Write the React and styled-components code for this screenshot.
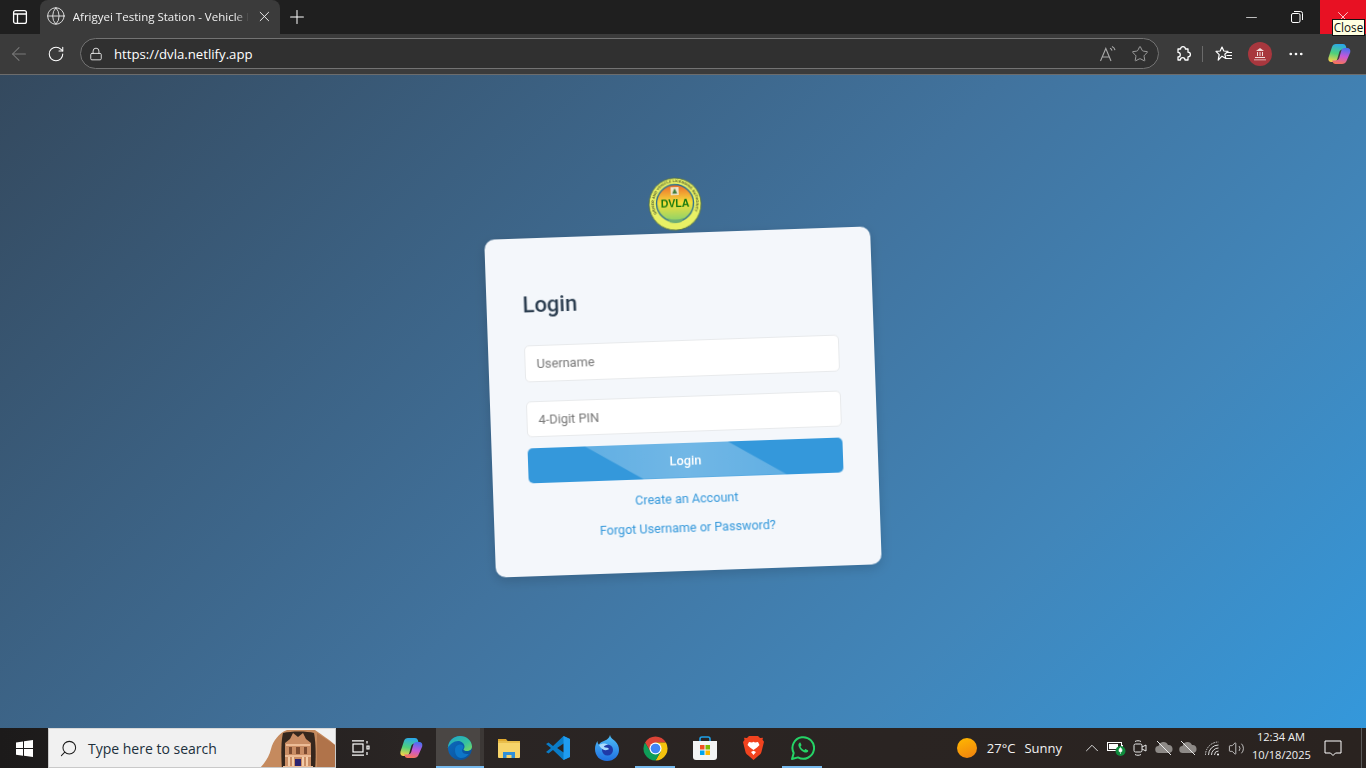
import React from 'react';
import styled, { createGlobalStyle } from 'styled-components';
import {
  ArrowLeft,
  ChevronUp,
  Ellipsis,
  Globe,
  Lock,
  Minus,
  Plus,
  RotateCw,
  Search,
  Star,
  Volume2,
  X,
} from 'lucide-react';

const GlobalStyle = createGlobalStyle`
  html, body {
    margin: 0;
    height: 100%;
    overflow: hidden;
  }
  * {
    box-sizing: border-box;
  }
`;

const Screen = styled.div`
  width: 1366px;
  height: 768px;
  display: flex;
  flex-direction: column;
  font-family: 'Open Sans', 'Noto Sans', sans-serif;
  overflow: hidden;
`;

/* browser chrome */
const TitleBar = styled.div`
  height: 34px;
  background: #1f1f1f;
  display: flex;
  align-items: stretch;
  color: #fff;
  position: relative;
`;

const SideButton = styled.div`
  width: 40px;
  display: flex;
  align-items: center;
  justify-content: center;
`;

const Tab = styled.div`
  width: 240px;
  background: #3b3b3b;
  border-radius: 8px 8px 0 0;
  display: flex;
  align-items: center;
  padding: 0 7px 2px 6px;
  gap: 7px;
`;

const TabTitle = styled.span`
  flex: 1;
  font-size: 11.5px;
  white-space: nowrap;
  color: #f2f2f2;
  -webkit-mask-image: linear-gradient(90deg, #000 92%, transparent 100%);
  mask-image: linear-gradient(90deg, #000 92%, transparent 100%);
`;

const NewTab = styled.div`
  width: 34px;
  display: flex;
  align-items: center;
  justify-content: center;
`;

const Spacer = styled.div`
  flex: 1;
`;

const WinButton = styled.div`
  width: 46px;
  display: flex;
  align-items: center;
  justify-content: center;
  background: ${({ $close }) => ($close ? '#e81123' : 'transparent')};
`;

const Tooltip = styled.div`
  position: absolute;
  top: 19px;
  right: 1px;
  width: 33px;
  height: 17px;
  background: #ffffe1;
  border: 1px solid #111;
  color: #111;
  font-size: 11.7px;
  line-height: 15px;
  text-align: center;
  z-index: 2;
`;

const ToolBar = styled.div`
  height: 41px;
  background: #3b3b3b;
  border-bottom: 1px solid #6c6c6c;
  display: flex;
  align-items: center;
  color: #fff;
  padding-bottom: 1px;
`;

const NavButton = styled.div`
  width: ${({ $w }) => $w || 36}px;
  display: flex;
  align-items: center;
  justify-content: center;
`;

const AddressBar = styled.div`
  width: 1079px;
  height: 31px;
  margin: 0 6px 0 6px;
  border: 1px solid #737373;
  border-radius: 16px;
  background: #303030;
  display: flex;
  align-items: center;
  padding: 0 2px 0 8px;
`;

const Url = styled.span`
  flex: 1;
  margin-left: 11px;
  font-size: 13.2px;
  color: #fff;
`;

const AddressAction = styled.div`
  width: 32px;
  display: flex;
  justify-content: center;
  color: #a8a8a8;
`;

const Divider = styled.div`
  width: 1px;
  height: 16px;
  background: #6a6a6a;
  margin: 0 3px 0 1px;
`;

const Avatar = styled.div`
  width: 24px;
  height: 24px;
  border-radius: 50%;
  background: #a8373e;
  display: flex;
  align-items: center;
  justify-content: center;
`;

/* page */
const Page = styled.main`
  flex: 1;
  background: linear-gradient(135deg, #34495e 0%, #41739e 50%, #4186ba 75%, #3498db 100%);
  display: flex;
  align-items: center;
  justify-content: center;
  font-family: Roboto, 'Liberation Sans', sans-serif;
`;

const Card = styled.section`
  width: 386px;
  height: 338px;
  padding: 53px 35px 0 36px;
  background: #f4f7fb;
  border-radius: 10px;
  box-shadow: 0 4px 12px rgba(0, 0, 0, 0.15);
  transform: rotate(-2deg);
  will-change: transform;
  position: relative;
`;

const Logo = styled.svg`
  position: absolute;
  top: -56px;
  left: 165px;
  width: 54px;
  height: 54px;
`;

const Heading = styled.h2`
  margin: 0 0 26px;
  font-size: 22px;
  line-height: 28px;
  font-weight: 500;
  color: #2c3e50;
`;

const Input = styled.input`
  display: block;
  width: 100%;
  height: 36.5px;
  padding: 0 11px;
  margin-bottom: ${({ $last }) => ($last ? 10.5 : 19.25)}px;
  border: 1px solid #e8eaec;
  border-radius: 5px;
  background: #fff;
  font-family: inherit;
  font-size: 12.8px;
  outline: none;

  &::placeholder {
    color: #777;
  }
`;

const LoginButton = styled.button`
  display: block;
  width: 100%;
  height: 35px;
  border: none;
  border-radius: 5px;
  background: #3498db;
  color: #fff;
  font-family: inherit;
  font-size: 12.8px;
  font-weight: 500;
  position: relative;
  overflow: hidden;

  &::before {
    content: '';
    position: absolute;
    inset: 0;
    background: linear-gradient(90deg, rgba(255, 255, 255, 0.18), rgba(255, 255, 255, 0.3), rgba(255, 255, 255, 0.18));
    clip-path: polygon(57px 0, 200px 0, 258px 100%, 115px 100%);
  }

  span {
    position: relative;
  }
`;

const LinkRow = styled.div`
  display: flex;
  flex-direction: column;
  align-items: center;
  gap: 12px;
  margin-top: 12px;
`;

const TextLink = styled.a`
  font-size: 12.6px;
  line-height: 17px;
  color: #3498db;
`;

/* windows taskbar */
const TaskBar = styled.footer`
  height: 40px;
  background: linear-gradient(90deg, #1c1a1a, #2a2524 30%, #2a2320);
  display: flex;
  align-items: stretch;
  color: #fff;
`;

const StartButton = styled.div`
  width: 48px;
  display: flex;
  align-items: center;
  justify-content: center;
`;

const SearchBox = styled.div`
  width: 288px;
  background: #f1f1f1;
  border: 1px solid #c9c9c9;
  border-top-color: #d8d8d8;
  display: flex;
  align-items: center;
  padding-left: 10px;
  color: #1c1c1c;
  position: relative;
  overflow: hidden;
`;

const SearchIcon = styled(Search)`
  transform: scaleX(-1);
`;

const SearchText = styled.span`
  margin-left: 10px;
  font-size: 14px;
  color: #20303c;
`;

const Petra = styled.svg`
  position: absolute;
  right: 0;
  top: 0;
  width: 76px;
  height: 40px;
`;

const TaskItem = styled.div`
  width: ${({ $w }) => $w || 49}px;
  display: flex;
  align-items: center;
  justify-content: center;
  position: relative;
  background: ${({ $active }) => ($active ? '#4a4644' : 'transparent')};
  box-shadow: ${({ $active }) => ($active ? 'inset -4px 0 0 #3c3836' : 'none')};

  &::after {
    content: '';
    display: ${({ $open }) => ($open ? 'block' : 'none')};
    position: absolute;
    left: ${({ $active }) => ($active ? 0 : '4px')};
    right: ${({ $active }) => ($active ? 0 : '5px')};
    bottom: 0;
    height: 2px;
    background: #76b9ed;
  }
`;

const Weather = styled.div`
  display: flex;
  align-items: center;
  margin-left: auto;
  font-size: 13px;
  color: #f1f1f1;
`;

const Sun = styled.div`
  width: 20px;
  height: 20px;
  border-radius: 50%;
  background: linear-gradient(160deg, #ffb900, #f0800f);
  margin-right: 10px;
`;

const WeatherLabel = styled.span`
  margin-left: 9px;
`;

const Tray = styled.div`
  display: flex;
  align-items: center;
  margin-left: 18px;
`;

const TrayIcon = styled.div`
  width: 24px;
  display: flex;
  align-items: center;
  justify-content: center;
  color: #e8e8e8;
`;

const Clock = styled.div`
  width: 58px;
  margin-left: 4px;
  white-space: nowrap;
  text-align: center;
  font-size: 11.1px;
  line-height: 18px;
  color: #f1f1f1;
`;

const Notify = styled.div`
  width: 46px;
  display: flex;
  align-items: center;
  justify-content: center;
`;

const ShowDesktop = styled.div`
  width: 5px;
  margin-left: 5px;
  border-left: 1px solid #5a5a5a;
`;

const SidebarIcon = () => (
  <svg width="16" height="16" viewBox="0 0 16 16" fill="none" stroke="#fff" strokeWidth="1.3">
    <rect x="1.6" y="1.6" width="12.8" height="12.8" rx="2" />
    <path d="M2 5h12M5.5 5v9" />
  </svg>
);

const RestoreIcon = () => (
  <svg width="12" height="12" viewBox="0 0 12 12" fill="none" stroke="#fff" strokeWidth="1">
    <rect x="0.5" y="2.5" width="8.5" height="9" rx="1.5" />
    <path d="M3 0.5h6.5a2 2 0 0 1 2 2V9" />
  </svg>
);

const ReadAloudIcon = () => (
  <svg width="18" height="18" viewBox="0 0 18 18" fill="none" stroke="currentColor" strokeWidth="1.1">
    <path d="M1.5 16 6.8 3.5 12 16M3.4 12h7" />
    <path d="M11 3.2c1.2.5 1.8 1.3 2 2.4M13 1.4c1.800.8 2.700 2 3 3.800" />
  </svg>
);

const ExtensionIcon = () => (
  <svg width="18" height="18" viewBox="0 0 18 18" fill="none" stroke="#fff" strokeWidth="1.3" strokeLinejoin="round">
    <path d="M4 4h2.600a2.400 2.400 0 1 1 4.800 0H14v3.200a2.400 2.400 0 1 1 0 4.800V15h-3a2.300 2.300 0 0 0-4.600 0H4v-3a2.300 2.300 0 0 0 0-4.600z" />
  </svg>
);

const FavoritesIcon = () => (
  <svg width="18" height="18" viewBox="0 0 18 18" fill="none" stroke="#fff" strokeWidth="1.2">
    <path d="M7 2 8.800 6l4.200.4-3.200 2.800 1 4.200L7 11.200 3.200 15l1-5.300L1 6.400 5.200 6z" strokeLinejoin="round" />
    <path d="M12 7.500h5M11.500 10.500h5.500M11 13.500h6" />
  </svg>
);

const CopilotIcon = ({ size = 24, id = 'cp' }) => (
  <svg width={size} height={size} viewBox="0 0 24 24">
    <defs>
      <linearGradient id={`${id}a`} x1="0.6" y1="0" x2="0.4" y2="1">
        <stop offset="0" stopColor="#2aa7ea" />
        <stop offset="0.55" stopColor="#4fd07a" />
        <stop offset="1" stopColor="#f4d24b" />
      </linearGradient>
      <linearGradient id={`${id}b`} x1="0.6" y1="0" x2="0.4" y2="1">
        <stop offset="0" stopColor="#4a6ff0" />
        <stop offset="0.5" stopColor="#c558d8" />
        <stop offset="1" stopColor="#f7735a" />
      </linearGradient>
    </defs>
    <path d="M9 2h7c1.500 0 2.300.8 2.800 2l1 3.500h-4c-2 0-3 1-3.500 2.500l-2 7c-.5 1.800-1.500 3-3.500 3H4.500C2 20 .8 18 1.500 15.500L5 5c.6-2 2-3 4-3z" fill={`url(#${id}a)`} />
    <path d="M15 22H8.500c-1.500 0-2.300-.8-2.800-2l-.5-1.500h3.500c2 0 3-1 3.500-2.500l2-7c.5-1.800 1.500-3 3.500-3h2.500c2.500 0 3.700 2 3 4.500L19.500 19c-.7 2-2.500 3-4.500 3z" fill={`url(#${id}b)`} />
  </svg>
);

const WindowsIcon = () => (
  <svg width="17" height="17" viewBox="0 0 17 17" fill="#fff">
    <path d="M0 2.400 7 1.400v6.700H0zM8 1.200 17 0v8.100H8zM0 9h7v6.700l-7-1zM8 9h9v8l-9-1.200z" />
  </svg>
);

const TaskViewIcon = () => (
  <svg width="18" height="16" viewBox="0 0 18 16" fill="none" stroke="#fff" strokeWidth="1.2">
    <path d="M0 .8h12M0 15.200h12" />
    <rect x="1" y="4" width="10" height="8" />
    <path d="M15 1v2.500M15 6h2v3h-2zM15 12v3" />
  </svg>
);

const EdgeIcon = () => (
  <svg width="26" height="26" viewBox="0 0 26 26">
    <defs>
      <linearGradient id="edgeTop" x1="0" y1="0" x2="1" y2="1">
        <stop offset="0" stopColor="#1fa4c9" />
        <stop offset="0.6" stopColor="#35c1a0" />
        <stop offset="1" stopColor="#7ddb5c" />
      </linearGradient>
      <linearGradient id="edgeLow" x1="0" y1="0" x2="1" y2="1">
        <stop offset="0" stopColor="#0c6cc0" />
        <stop offset="1" stopColor="#0b4f96" />
      </linearGradient>
    </defs>
    <circle cx="13" cy="13" r="12" fill="url(#edgeLow)" />
    <path d="M1 13C1 6 6.500 1 13 1c6.800 0 12 5 12 10.500 0 3-2.500 4.500-5 4.500-2 0-3.500-.6-3.500-1.500 0-.7 1-1 1-3 0-3-3-5.500-6.500-5.500-4.500 0-7.500 3-10.500 7z" fill="url(#edgeTop)" />
    <path d="M8 15c0-4 3-5.500 5.500-5.500 1.500 0 3 .9 3 2.500 0 1.800-1.500 2-1.500 3.500 0 3 4 4.300 7 3.200-2 2.800-5 4.300-8 4.300-4 0-6-4-6-8z" fill="#0d76c8" />
  </svg>
);

const FolderIcon = () => (
  <svg width="24" height="20" viewBox="0 0 24 20">
    <path d="M1 1h8l2 2.500H1z" fill="#e0a92e" />
    <rect x="1" y="3" width="22" height="17" rx="1" fill="#f7d46a" />
    <rect x="1" y="3" width="22" height="2" fill="#e9be4c" />
    <path d="M6 20v-6h12v6h-3.500v-3h-5v3z" fill="#2f8fd8" />
  </svg>
);

const VSCodeIcon = () => (
  <svg width="24" height="24" viewBox="0 0 24 24">
    <path d="M17.500 0 24 3v18l-6.500 3L7 14l-4.500 3.500L0 16l5-4-5-4 2.500-1.500L7 10z" fill="#0a7cc7" />
    <path d="M17.500 0 24 3v18l-6.500 3V16.500L11 12l6.500-4.500z" fill="#1f9cf0" />
    <path d="M17.500 7.500 11 12l6.500 4.500z" fill="#2a2320" />
  </svg>
);

const FirefoxIcon = () => (
  <svg width="24" height="26" viewBox="0 0 24 26">
    <defs>
      <linearGradient id="ffx" x1="0.5" y1="0" x2="0.5" y2="1">
        <stop offset="0" stopColor="#4fc0f8" />
        <stop offset="1" stopColor="#1f6fe0" />
      </linearGradient>
    </defs>
    <path d="M15 0c.5 3 3 4 5 6 3 3 4 6 4 9 0 6-5 11-12 11S0 21 0 14c0-3 1-6 2.500-8C2.500 8 3 9 4 9.500 5 7 8 6.500 10 5.500 12 4.500 14.500 3 15 0z" fill="url(#ffx)" />
    <circle cx="12.500" cy="15" r="5.500" fill="#1f3aa8" />
    <path d="M4 10c3-2 7-2 9 0-2 0-4 .5-4 2 2 1 4 0 5 2-2 2-7 2-10-4z" fill="#a8dafc" />
  </svg>
);

const ChromeIcon = () => (
  <svg width="29" height="29" viewBox="0 0 48 48">
    <path d="M41.320 14A20 20 0 0 0 6.680 14L15.340 29 24 14z" fill="#db4437" />
    <path d="M41.320 14A20 20 0 0 1 24 44L32.660 29 24 14z" fill="#f4c20d" />
    <path d="M24 44A20 20 0 0 1 6.680 14L15.340 29H32.660z" fill="#0f9d58" />
    <circle cx="24" cy="24" r="10" fill="#fff" />
    <circle cx="24" cy="24" r="8" fill="#4285f4" />
  </svg>
);

const StoreIcon = () => (
  <svg width="24" height="24" viewBox="0 0 24 24">
    <path d="M7 6V3a2 2 0 0 1 2-2h6a2 2 0 0 1 2 2v3" fill="none" stroke="#1fa0e8" strokeWidth="1.600" />
    <path d="M0 5h24v16a3 3 0 0 1-3 3H3a3 3 0 0 1-3-3z" fill="#f4f4f4" />
    <rect x="7" y="9" width="4.500" height="4.500" fill="#f25022" />
    <rect x="12.500" y="9" width="4.500" height="4.500" fill="#7fba00" />
    <rect x="7" y="14.500" width="4.500" height="4.500" fill="#00a4ef" />
    <rect x="12.500" y="14.500" width="4.500" height="4.500" fill="#ffb900" />
  </svg>
);

const BraveIcon = () => (
  <svg width="21" height="24" viewBox="0 0 21 24">
    <path d="M6 0h9l2 2 3-.2-.5 2 1.500 2-2.500 10c-.4 1.500-1 2.500-2.500 3.500L10.500 24 5 19.300C3.500 18.300 2.900 17.300 2.500 16L0 6l1.500-2L1 1.800 4 2z" fill="#f1431f" />
    <path d="M10.500 14 7 11.500 4.500 9 6 6l3 .5 1.500-.7L12 6.500 15 6l1.500 3L14 11.500zM8 16l2.500-1.200L13 16l-2.500 3z" fill="#fff" />
  </svg>
);

const WhatsAppIcon = () => (
  <svg width="24" height="24" viewBox="0 0 24 24" fill="none">
    <path d="M1 23l1.700-6A10.800 10.800 0 1 1 7 21.400z" stroke="#25d366" strokeWidth="2" strokeLinejoin="round" />
    <path d="M8.500 6.800c-1 .7-1.400 2-.8 3.600 1 2.800 3.300 5 6 6 1.500.5 2.700 0 3.400-1 .3-.5.200-1-.2-1.200l-2-1c-.4-.2-.7-.1-1 .2l-.7.800c-1.600-.6-3-2-3.700-3.600l.7-.8c.3-.3.300-.6.200-1l-.8-1.800c-.2-.5-.7-.5-1.100-.2z" fill="#25d366" />
  </svg>
);

const BatteryIcon = () => (
  <svg width="19" height="18" viewBox="0 0 19 18">
    <rect x="0.500" y="3.500" width="14" height="8" fill="none" stroke="#fff" />
    <rect x="2" y="5" width="9" height="5" fill="#fff" />
    <rect x="14.500" y="6" width="1.500" height="3" fill="#fff" />
    <circle cx="13.500" cy="12" r="5" fill="#0f8a3c" />
    <path d="M13.500 8.500c-1.500 1.500-2 3-1.200 4.200h2.400c.8-1.200.3-2.700-1.200-4.200zM13.500 12v3" fill="#fff" stroke="#fff" strokeWidth="0.600" />
  </svg>
);

const CameraIcon = () => (
  <svg width="18" height="18" viewBox="0 0 18 18" fill="none" stroke="#e8e8e8" strokeWidth="1">
    <rect x="3" y="5" width="8" height="8" rx="1.500" />
    <path d="M11 8l4-2v6l-4-2M4 2.500c1.600-1 4.400-1 6 0M4 15.500c1.600 1 4.400 1 6 0" />
  </svg>
);

const CloudOffIcon = () => (
  <svg width="18" height="16" viewBox="0 0 18 16">
    <path d="M4 13a3.500 3.500 0 0 1-.5-7A5 5 0 0 1 13 5a4 4 0 0 1 1 8z" fill="#8d8986" />
    <path d="M2 1l14 14" stroke="#e8e8e8" strokeWidth="1" />
  </svg>
);

const WifiIcon = () => (
  <svg width="16" height="16" viewBox="0 0 16 16" fill="none" stroke="#d9d9d9" strokeWidth="1">
    <path d="M1.500 15a13 13 0 0 1 13-13" strokeDasharray="1.500 1" />
    <path d="M4.500 15a10 10 0 0 1 10-10" />
    <path d="M7.500 15a7 7 0 0 1 7-7" />
    <path d="M10.500 15a4 4 0 0 1 4-4" />
    <circle cx="14" cy="14.500" r="1" fill="#fff" stroke="none" />
  </svg>
);

const NotifyIcon = () => (
  <svg width="18" height="18" viewBox="0 0 18 18" fill="none" stroke="#fff" strokeWidth="1">
    <path d="M1 2h16v12h-5.500L9 16.500 6.500 14H1z" />
  </svg>
);

const DvlaLogo = () => (
  <Logo viewBox="0 0 54 54">
    <defs>
      <linearGradient id="dvlaFill" x1="0" y1="0" x2="0" y2="1">
        <stop offset="0" stopColor="#ee6a2a" />
        <stop offset="0.5" stopColor="#f4e03c" />
        <stop offset="1" stopColor="#86d26c" />
      </linearGradient>
      <path id="ringPath" d="M8.500 36A21 21 0 1 1 45.500 36" />
    </defs>
    <circle cx="27" cy="27" r="26" fill="#e9f165" stroke="#55703a" strokeWidth="0.800" />
    <text fontSize="3.600" fontFamily="Liberation Sans, sans-serif" fontWeight="700" fill="#3c4a2a">
      <textPath href="#ringPath" textLength="85">DRIVER AND VEHICLE LICENSING AUTHORITY</textPath>
    </text>
    <circle cx="27" cy="26" r="18.500" fill="url(#dvlaFill)" stroke="#2c6f8f" strokeWidth="1.400" />
    <rect x="23" y="10" width="8" height="8" fill="#efe3c8" />
    <path d="M27 11l2.500 5.500h-5z" fill="#3f7a3a" />
    <text x="27" y="30" textAnchor="middle" fontSize="10.500" fontFamily="Liberation Sans, sans-serif" fontWeight="700" fill="#14780f">
      DVLA
    </text>
    <path d="M19 41q8 3 16 0l-2 4q-6 2-12 0z" fill="#6fae74" />
  </Logo>
);

const PetraArt = () => (
  <Petra viewBox="0 0 76 40">
    <path d="M0 40C6 34 10 28 12 20 14 12 20 4 28 1H56C60 4 70 10 76 16V40z" fill="#c58a5e" />
    <path d="M58 4c6 4 12 8 18 12v24H58z" fill="#b0734a" />
    <path d="M23 40C22 28 22 12 24 4c8-2 24-2 31 0 2 10 2 26 1 36z" fill="#35261d" />
    <path d="M26 40V14l5-4 3-6 5 4 5-4 3 6 5 4v26z" fill="#c98c64" />
    <path d="M27 15h24v2H27zM26 26h26v2H26zM24 37h30v3H24z" fill="#ecbb96" />
    <path d="M29 28h2v9h-2zM33 28h2v9h-2zM43 28h2v9h-2zM47 28h2v9h-2z" fill="#f2cba8" />
    <rect x="36" y="30" width="6" height="7" fill="#2c2470" />
    <path d="M30 18h3v7h-3zM45 18h3v7h-3zM37 18h4v7h-4z" fill="#7c4a30" />
  </Petra>
);

const App = () => (
  <Screen>
    <GlobalStyle />
    <TitleBar>
      <SideButton>
        <SidebarIcon />
      </SideButton>
      <Tab>
        <Globe size={20} strokeWidth={1.1} color="#e8e8e8" />
        <TabTitle>Afrigyei Testing Station - Vehicle I</TabTitle>
        <X size={17} strokeWidth={1.4} color="#eee" />
      </Tab>
      <NewTab>
        <Plus size={22} strokeWidth={1.1} />
      </NewTab>
      <Spacer />
      <WinButton>
        <Minus size={17} strokeWidth={1} />
      </WinButton>
      <WinButton>
        <RestoreIcon />
      </WinButton>
      <WinButton $close>
        <X size={18} strokeWidth={1} />
      </WinButton>
      <Tooltip>Close</Tooltip>
    </TitleBar>
    <ToolBar>
      <NavButton $w={38}>
        <ArrowLeft size={22} strokeWidth={1.1} color="#7b7b7b" />
      </NavButton>
      <NavButton>
        <RotateCw size={18} strokeWidth={1.4} />
      </NavButton>
      <AddressBar>
        <Lock size={14} strokeWidth={1.5} color="#eee" />
        <Url>https://dvla.netlify.app</Url>
        <AddressAction>
          <ReadAloudIcon />
        </AddressAction>
        <AddressAction>
          <Star size={18} strokeWidth={1.2} />
        </AddressAction>
      </AddressBar>
      <NavButton>
        <ExtensionIcon />
      </NavButton>
      <Divider />
      <NavButton>
        <FavoritesIcon />
      </NavButton>
      <NavButton>
        <Avatar>
          <svg width="14" height="14" viewBox="0 0 14 14" fill="#f2dcdc">
            <path d="M7 1 11 4H3zM4 5h1v4H4zM6.500 5h1v4h-1zM9 5h1v4H9zM2 10h10v1H2zM1 12.500h12v.8H1z" />
          </svg>
        </Avatar>
      </NavButton>
      <NavButton>
        <Ellipsis size={18} strokeWidth={1.6} />
      </NavButton>
      <NavButton $w={50}>
        <CopilotIcon id="cpTop" />
      </NavButton>
    </ToolBar>
    <Page>
      <Card>
        <DvlaLogo />
        <Heading>Login</Heading>
        <Input placeholder="Username" />
        <Input placeholder="4-Digit PIN" $last />
        <LoginButton>
          <span>Login</span>
        </LoginButton>
        <LinkRow>
          <TextLink>Create an Account</TextLink>
          <TextLink>Forgot Username or Password?</TextLink>
        </LinkRow>
      </Card>
    </Page>
    <TaskBar>
      <StartButton>
        <WindowsIcon />
      </StartButton>
      <SearchBox>
        <SearchIcon size={19} strokeWidth={1.3} />
        <SearchText>Type here to search</SearchText>
        <PetraArt />
      </SearchBox>
      <TaskItem>
        <TaskViewIcon />
      </TaskItem>
      <TaskItem $w={51}>
        <CopilotIcon id="cpTask" />
      </TaskItem>
      <TaskItem $w={48} $active $open>
        <EdgeIcon />
      </TaskItem>
      <TaskItem>
        <FolderIcon />
      </TaskItem>
      <TaskItem>
        <VSCodeIcon />
      </TaskItem>
      <TaskItem>
        <FirefoxIcon />
      </TaskItem>
      <TaskItem $open>
        <ChromeIcon />
      </TaskItem>
      <TaskItem>
        <StoreIcon />
      </TaskItem>
      <TaskItem>
        <BraveIcon />
      </TaskItem>
      <TaskItem $open>
        <WhatsAppIcon />
      </TaskItem>
      <Weather>
        <Sun />
        <span>27°C</span>
        <WeatherLabel>Sunny</WeatherLabel>
      </Weather>
      <Tray>
        <TrayIcon>
          <ChevronUp size={22} strokeWidth={1} />
        </TrayIcon>
        <TrayIcon>
          <BatteryIcon />
        </TrayIcon>
        <TrayIcon>
          <CameraIcon />
        </TrayIcon>
        <TrayIcon>
          <CloudOffIcon />
        </TrayIcon>
        <TrayIcon>
          <CloudOffIcon />
        </TrayIcon>
        <TrayIcon>
          <WifiIcon />
        </TrayIcon>
        <TrayIcon>
          <Volume2 size={17} strokeWidth={1.1} />
        </TrayIcon>
      </Tray>
      <Clock>
        <div>12:34 AM</div>
        <div>10/18/2025</div>
      </Clock>
      <Notify>
        <NotifyIcon />
      </Notify>
      <ShowDesktop />
    </TaskBar>
  </Screen>
);

export default App;
